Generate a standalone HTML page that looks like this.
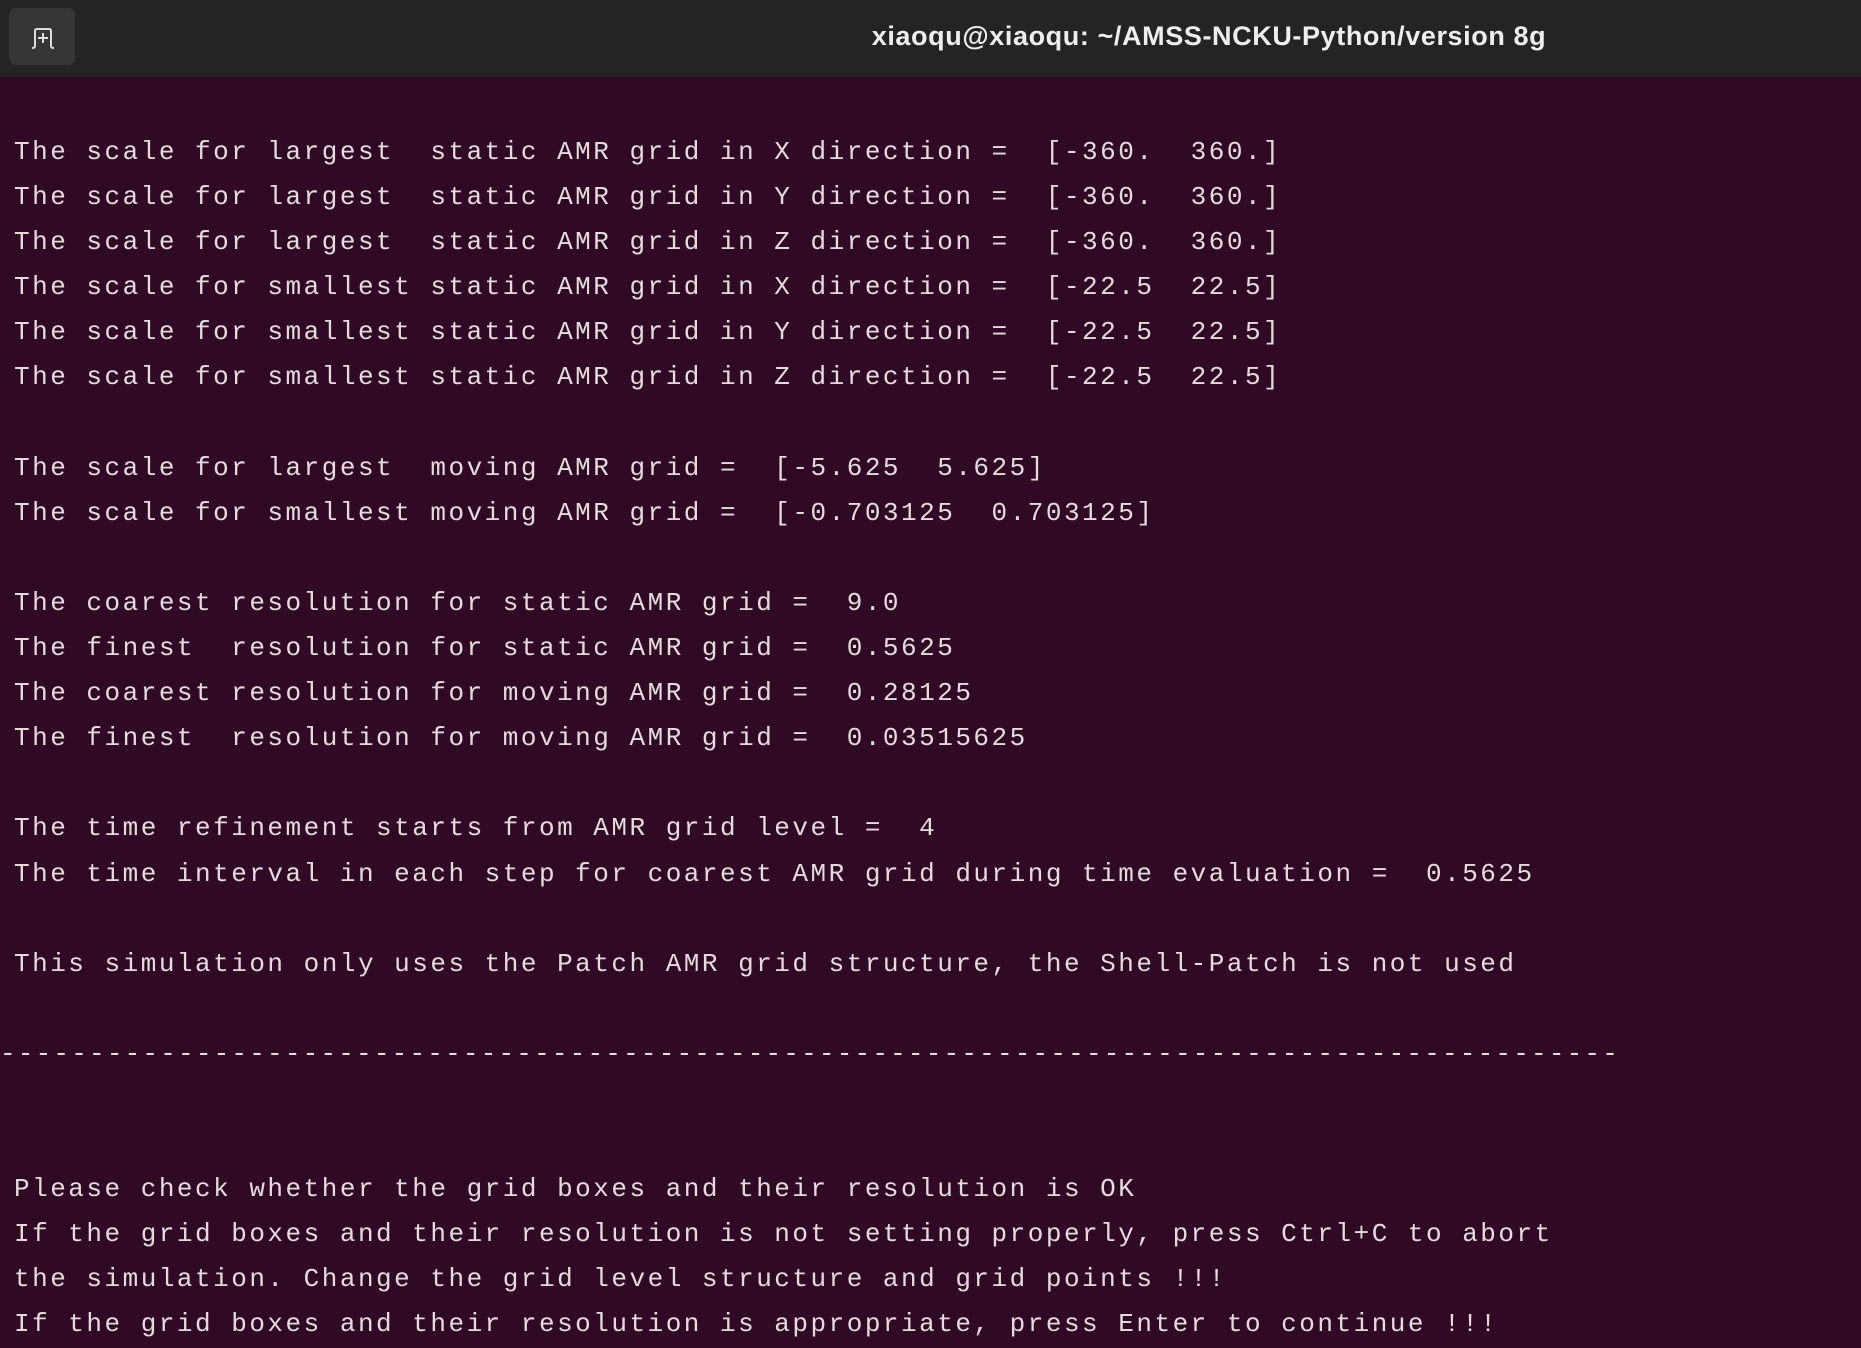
<!DOCTYPE html>
<html><head><meta charset="utf-8"><style>
html,body{margin:0;padding:0;width:1861px;height:1338px;overflow:hidden;background:#300a24;}
.hdr{position:absolute;left:0;top:0;width:1861px;height:77px;background:#242424;}
.btn{position:absolute;left:9px;top:8px;width:66px;height:57px;background:#363636;border-radius:7px;}
.title{position:absolute;left:0;width:2418px;top:0;height:73px;text-align:center;color:#eeeeee;font-family:"Liberation Sans",sans-serif;font-weight:bold;font-size:27px;letter-spacing:0.6px;line-height:73px;}
.term{position:absolute;left:14px;top:130px;color:#e4dcdc;font-family:"Liberation Mono",monospace;font-size:26px;letter-spacing:2.5px;line-height:45.1px;white-space:pre;}
.d{margin-left:-14px;letter-spacing:2.2px;}
</style></head><body>
<div class="hdr"><div class="btn"><svg width="66" height="57" viewBox="0 0 66 57"><path d="M26 38 q0 2 -3 2 M26 38 v-15 q0 -2 2 -2 h12 q2 0 2 2 v15 q0 2 3 2 M34 25 v10 M29 30 h10" stroke="#ddd" stroke-width="2" fill="none"/></svg></div>
<div class="title">xiaoqu@xiaoqu: ~/AMSS-NCKU-Python/version 8g</div></div>
<div class="term">The scale for largest  static AMR grid in X direction =  [-360.  360.]
The scale for largest  static AMR grid in Y direction =  [-360.  360.]
The scale for largest  static AMR grid in Z direction =  [-360.  360.]
The scale for smallest static AMR grid in X direction =  [-22.5  22.5]
The scale for smallest static AMR grid in Y direction =  [-22.5  22.5]
The scale for smallest static AMR grid in Z direction =  [-22.5  22.5]

The scale for largest  moving AMR grid =  [-5.625  5.625]
The scale for smallest moving AMR grid =  [-0.703125  0.703125]

The coarest resolution for static AMR grid =  9.0
The finest  resolution for static AMR grid =  0.5625
The coarest resolution for moving AMR grid =  0.28125
The finest  resolution for moving AMR grid =  0.03515625

The time refinement starts from AMR grid level =  4
The time interval in each step for coarest AMR grid during time evaluation =  0.5625

This simulation only uses the Patch AMR grid structure, the Shell-Patch is not used

<span class="d">-------------------------------------------------------------------------------------------</span>


Please check whether the grid boxes and their resolution is OK
If the grid boxes and their resolution is not setting properly, press Ctrl+C to abort
the simulation. Change the grid level structure and grid points !!!
If the grid boxes and their resolution is appropriate, press Enter to continue !!!</div>
</body></html>
